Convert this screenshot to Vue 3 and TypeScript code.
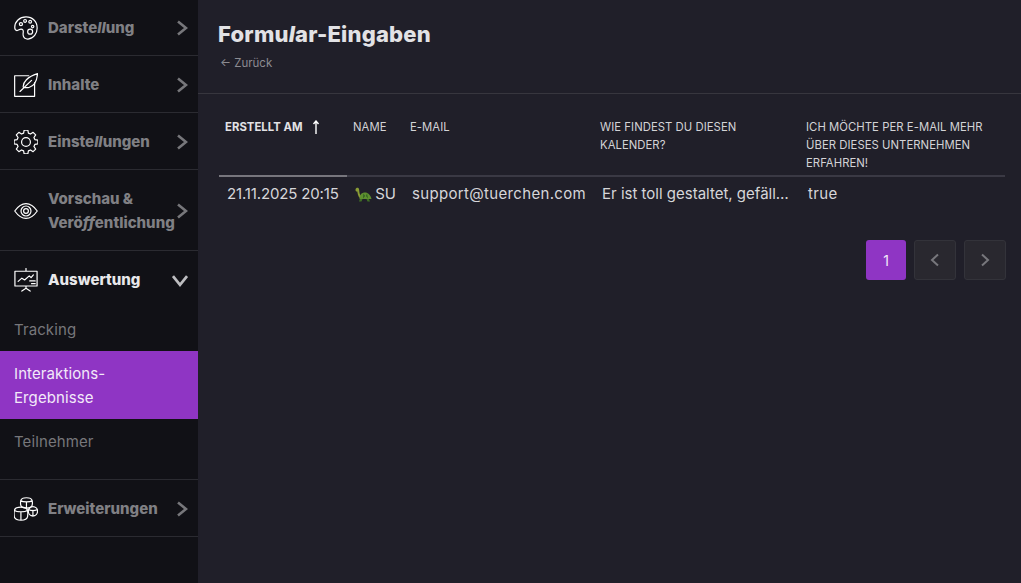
<template>
  <div class="layout">
    <aside class="sidebar">
      <div class="nav-item first">
        <svg class="nav-icon" viewBox="0 0 26 26"><path d="M13 1C6 1 .8 6 .8 12.300c0 2.200.9 3.500 2.400 3.500 1.700 0 2.700-1.600 4.400-1.600 1.900 0 2.800 1.500 2.400 3.600-.4 2.100-.5 4.600 1.700 6.200 1 .8 2.200 1.100 3.500 1 6-.4 9.900-6.200 9.900-12C25.100 6 20 1 13 1z"/><circle cx="7.500" cy="8.800" r="1.700"/><circle cx="12" cy="5.300" r="1.500"/><circle cx="17.500" cy="6.300" r="1.500"/><circle cx="17.500" cy="17" r="2.700"/><circle cx="20.200" cy="11.500" r="1.300"/></svg>
        <span class="nav-label">Darste<i>ll</i>ung</span>
        <svg class="chevron" viewBox="0 0 12 16"><path d="M2 1.500 10 8l-8 6.500"/></svg>
      </div>
      <div class="nav-item">
        <svg class="nav-icon" viewBox="0 0 26 26"><path d="M16 3H.7v22.300h21.600V10.500"/><path d="M6.500 20 19 8M10 15.500C9.500 10 14.500 4 25.500.7c-.5 6.300-3 13.500-9.300 15-2.400.5-4.200.2-6.200-.2z"/></svg>
        <span class="nav-label">Inhalte</span>
        <svg class="chevron" viewBox="0 0 12 16"><path d="M2 1.500 10 8l-8 6.500"/></svg>
      </div>
      <div class="nav-item">
        <svg class="nav-icon" viewBox="0 0 26 26"><circle cx="13" cy="13" r="4.800"/><path d="M11 1.500h4l.6 3.300 2.300 1 2.800-1.900 2.800 2.800-1.900 2.800 1 2.300 3.300.6v4l-3.300.6-1 2.300 1.900 2.800-2.800 2.800-2.800-1.900-2.300 1-.6 3.300h-4l-.6-3.300-2.300-1-2.800 1.900-2.800-2.800 1.900-2.800-1-2.300-3.300-.6v-4l3.300-.6 1-2.300-1.900-2.800 2.800-2.800 2.800 1.900 2.300-1z" transform="translate(0 -1.400)"/></svg>
        <span class="nav-label">Einste<i>ll</i>ungen</span>
        <svg class="chevron" viewBox="0 0 12 16"><path d="M2 1.500 10 8l-8 6.500"/></svg>
      </div>
      <div class="nav-item">
        <svg class="nav-icon" viewBox="0 0 26 26"><path d="M.8 13c3.500-5 7.600-8 12.200-8s8.700 3 12.200 8c-3.500 5-7.600 8-12.200 8S4.300 18 .8 13z"/><circle cx="13" cy="13" r="5.400"/><circle cx="13" cy="13" r="2.600"/></svg>
        <span class="nav-label"><span class="line">Vorschau &amp;</span><span class="line">Verö<i>ff</i>entlichung</span></span>
        <svg class="chevron" viewBox="0 0 12 16"><path d="M2 1.500 10 8l-8 6.500"/></svg>
      </div>
      <div class="nav-group">
        <div class="nav-item open">
          <svg class="nav-icon" viewBox="0 0 26 26"><path d="M13 .5v3M1 3.500h24v16H1zM13 19.500v2.500M13 22l-4.500 3M13 22l4.500 3"/><path d="M4.500 14.500l4-3.500 3 2 5-4.500 2 2 2.500-3M17 14h6M19 17h4"/></svg>
          <span class="nav-label">Auswertung</span>
          <svg class="chevron-down" viewBox="0 0 16 12"><path d="M1.500 2 8 10l6.500-8"/></svg>
        </div>
        <a class="sub-item">Tracking</a>
        <a class="sub-item active">Interaktions-Ergebnisse</a>
        <a class="sub-item">Teilnehmer</a>
      </div>
      <div class="nav-item">
        <svg class="nav-icon" viewBox="0 0 26 26"><path d="M13.500.8c3 0 5.800 1.200 6.200 3.200.3 1.400.3 3.400 0 4.800-.4 2-3 3.200-6.200 3.200s-5.800-1.200-6.200-3.200c-.3-1.400-.3-3.400 0-4.800C7.700 2 10.500.8 13.500.8zM7.500 4c2 1.700 10 1.700 12 0M13.500 5.300v6.700"/><path d="M7.500 11c3.500 0 6.800 1.300 7.200 3.700.3 2 .3 4.600 0 6.600-.4 2.600-3.700 3.900-7.200 3.900S.7 23.900.3 21.300c-.3-2-.3-4.600 0-6.600C.7 12.300 4 11 7.500 11zM.5 14.500c2.500 2 11.500 2 14 0M7.500 16v9"/><circle cx="20.500" cy="15.500" r="5"/><path d="M16 13.800c2.500 1 6.500 1 9 0M20.500 14.500v6"/></svg>
        <span class="nav-label">Erweiterungen</span>
        <svg class="chevron" viewBox="0 0 12 16"><path d="M2 1.500 10 8l-8 6.500"/></svg>
      </div>
    </aside>

    <main class="content">
      <header class="page-head">
        <h1>Formu<i>l</i>ar-Eingaben</h1>
        <a class="back">← Zurück</a>
      </header>
      <section class="table-wrap">
        <table>
          <colgroup>
            <col v-for="w in colWidths" :key="w" :style="{ width: w + 'px' }" />
          </colgroup>
          <thead>
            <tr>
              <th class="sorted">
                <span>ERSTELLT AM</span>
                <svg class="arrow" viewBox="0 0 8 14"><path d="M4 14V1M1.500 4 4 1l2.500 3"/></svg>
              </th>
              <th>NAME</th>
              <th>E-MAIL</th>
              <th>WIE FINDEST DU DIESEN KALENDER?</th>
              <th>ICH MÖCHTE PER E-MAIL MEHR ÜBER DIESES UNTERNEHMEN ERFAHREN!</th>
            </tr>
          </thead>
          <tbody>
            <tr>
              <td class="date">21.11.2025 20:15</td>
              <td class="name-cell">
                <svg class="turtle" viewBox="0 0 17 15">
                  <path fill="#3f6e24" d="M5 11.500 4 14.500h2.500l1-2.500zM11.500 12l1 2.500H15l-1.500-3.500z"/>
                  <path fill="#5d8f2f" d="M4.500 12C4.500 7.500 7 5.500 10 5.500s5.500 2.500 6.500 6.500z"/>
                  <path fill="#2e5c22" d="M8.500 6.500l1.500 2.500-2 2.500M12 6.500 11 9l2 2.500" />
                  <path fill="#8a9c35" d="M.5 2.500C.8.500 3.500.2 4 2c.4 1.800.2 4.500 1.500 6.500L4.500 11C3 9 2.500 6 2.300 4.500 1.200 4.700.3 3.800.5 2.500z"/>
                </svg>
                SU
              </td>
              <td class="wide">support@tuerchen.com</td>
              <td>Er ist toll gestaltet, gefäll…</td>
              <td class="wide">true</td>
            </tr>
          </tbody>
        </table>
        <nav class="pagination">
          <button class="page current">1</button>
          <button class="page arrow-btn"><svg viewBox="0 0 10 14"><path d="M8 1.500 2 7l6 5.500"/></svg></button>
          <button class="page arrow-btn"><svg viewBox="0 0 10 14"><path d="M2 1.500 8 7l-6 5.500"/></svg></button>
        </nav>
      </section>
    </main>
  </div>
</template>

<script setup lang="ts">
const colWidths: number[] = [128, 57, 190, 206, 205];
</script>

<style>
html, body {
  margin: 0;
  background: #201f29;
}
</style>

<style scoped>
.layout {
  display: flex;
  height: 583px;
  overflow: hidden;
  font-family: Inter, "Liberation Sans", sans-serif;
}

.sidebar {
  width: 198px;
  flex-shrink: 0;
  background-color: #111116;
}

.nav-item {
  display: flex;
  align-items: center;
  padding: 17px 10px 15px 14px;
  border-bottom: 1px solid #2b2b31;
  font-size: 15px;
  line-height: 24px;
  font-weight: 800;
  color: #808084;
}

.nav-item.first {
  padding-top: 16px;
}

.nav-item.open {
  border-bottom: none;
  color: #e8e8ea;
}

.nav-icon {
  width: 24px;
  height: 24px;
  margin-right: 10px;
  flex-shrink: 0;
  fill: none;
  stroke: #fff;
  stroke-width: 1.300;
  stroke-linejoin: round;
  stroke-linecap: round;
}

.nav-label {
  flex-grow: 1;
}

.line {
  display: block;
}

.chevron {
  width: 12px;
  height: 16px;
  flex-shrink: 0;
  fill: none;
  stroke: #77777b;
  stroke-width: 2.600;
}

.chevron-down {
  width: 18px;
  height: 13px;
  margin-left: -4px;
  margin-right: -1px;
  flex-shrink: 0;
  fill: none;
  stroke: #bdbdc0;
  stroke-width: 2.500;
}

.nav-group {
  padding-bottom: 16px;
  border-bottom: 1px solid #2b2b31;
}

.sub-item {
  display: block;
  padding: 11px 60px 9px 14px;
  font-size: 15px;
  line-height: 24px;
  letter-spacing: 0.1px;
  color: #77777b;
}

.sub-item.active {
  background-color: #8f35c4;
  color: #f3e9f9;
}

.content {
  flex-grow: 1;
  min-width: 0;
}

.page-head {
  padding: 18px 20px 22px;
  border-bottom: 1px solid #37363e;
  height: 53px;
}

h1 {
  margin: 0;
  font-size: 22px;
  line-height: 32px;
  font-weight: 800;
  letter-spacing: 0.2px;
  color: #e2e2e5;
}

.back {
  display: block;
  margin-top: 4px;
  margin-left: 2px;
  font-size: 11.500px;
  line-height: 18px;
  color: #8c8b91;
}

.table-wrap {
  padding: 24px 16px 0 21px;
}

table {
  width: 786px;
  border-collapse: collapse;
  table-layout: fixed;
}

th {
  padding: 0 6px;
  height: 58px;
  vertical-align: top;
  text-align: left;
  font-size: 11.300px;
  line-height: 18px;
  letter-spacing: 0.05px;
  font-weight: 400;
  color: #d3d3d6;
  border-bottom: 2px solid #3a3944;
  box-sizing: border-box;
}

th.sorted {
  font-weight: 700;
  color: #e2e2e5;
  border-bottom-color: #77767d;
}

.arrow {
  width: 8px;
  height: 14px;
  margin-left: 9px;
  margin-bottom: -3px;
  fill: none;
  stroke: #fff;
  stroke-width: 1.400;
}

td {
  padding: 7px 8px 8px;
  font-size: 15px;
  line-height: 20px;
  color: #d6d6d9;
  white-space: nowrap;
  overflow: hidden;
}

td.date {
  letter-spacing: -0.15px;
}

td.wide {
  letter-spacing: 0.33px;
}

.turtle {
  width: 17px;
  height: 15px;
  margin-right: -1px;
  vertical-align: -3px;
}

.pagination {
  display: flex;
  justify-content: flex-end;
  gap: 8px;
  margin-top: 28px;
  margin-right: -1px;
}

.page {
  box-sizing: border-box;
  width: 42px;
  height: 40px;
  padding: 0;
  display: flex;
  align-items: center;
  justify-content: center;
  border: 1px solid #33333a;
  border-radius: 3px;
  background-color: #29282f;
  font-family: inherit;
}

.page.current {
  width: 40px;
  border: none;
  background-color: #8f35c4;
  color: #f3e9f9;
  font-size: 14px;
}

.arrow-btn svg {
  width: 10px;
  height: 14px;
  fill: none;
  stroke: #77777c;
  stroke-width: 2;
}
</style>
